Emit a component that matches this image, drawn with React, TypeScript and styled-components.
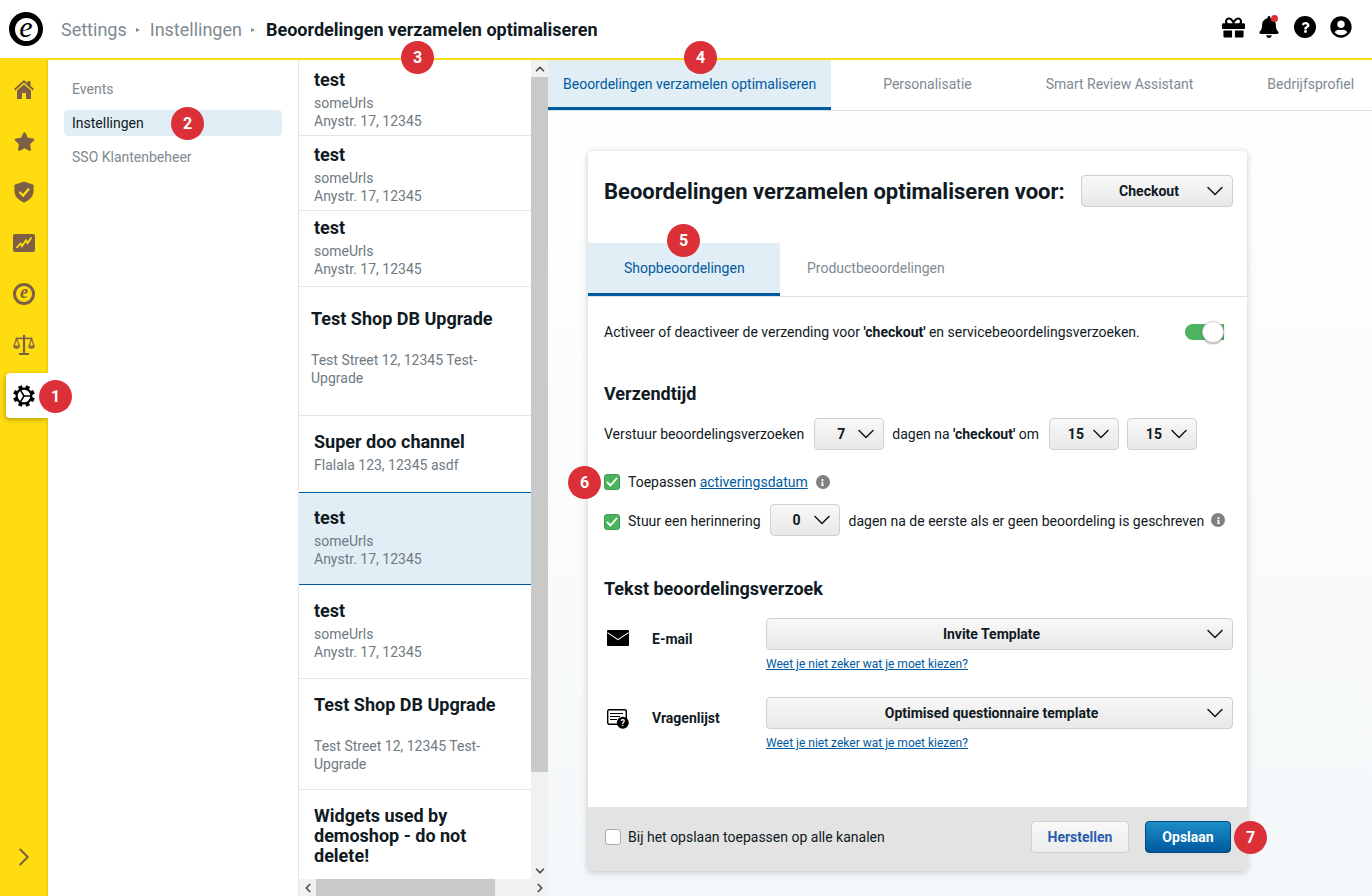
import * as React from 'react';
import styled, { createGlobalStyle } from 'styled-components';
import { FaBell, FaGift, FaInfo, FaQuestion, FaStar, FaUserCircle } from 'react-icons/fa';
import { FiChevronDown, FiChevronLeft, FiChevronRight, FiChevronUp } from 'react-icons/fi';

const GlobalStyle = createGlobalStyle`
  html, body {
    margin: 0;
    padding: 0;
    height: 100%;
    overflow: hidden;
    font-family: Roboto, "Liberation Sans", sans-serif;
    color: #0f1a23;
    background: #fff;
  }
  * { box-sizing: border-box; }
`;

const shops = [
  { title: 'test', sub: 'someUrls', address: 'Anystr. 17, 12345', height: 76, pad: 10, inset: 15 },
  { title: 'test', sub: 'someUrls', address: 'Anystr. 17, 12345', height: 75, pad: 9, inset: 15 },
  { title: 'test', sub: 'someUrls', address: 'Anystr. 17, 12345', height: 76, pad: 7, inset: 15 },
  { title: 'Test Shop DB Upgrade', address: 'Test Street 12, 12345 Test-Upgrade', height: 129, pad: 22, inset: 12, spaced: true },
  { title: 'Super doo channel', address: 'Flalala 123, 12345 asdf', height: 77, pad: 16, inset: 15 },
  { title: 'test', sub: 'someUrls', address: 'Anystr. 17, 12345', height: 92, pad: 15, inset: 15, active: true },
  { title: 'test', sub: 'someUrls', address: 'Anystr. 17, 12345', height: 94, pad: 16, inset: 15 },
  { title: 'Test Shop DB Upgrade', address: 'Test Street 12, 12345 Test-Upgrade', height: 111, pad: 16, inset: 15, spaced: true },
  { title: 'Widgets used by demoshop - do not delete!', height: 100, pad: 16, inset: 15 },
];

const badges = [
  { n: 1, x: 55, y: 396 },
  { n: 2, x: 187, y: 123 },
  { n: 3, x: 417, y: 57 },
  { n: 4, x: 700, y: 57 },
  { n: 5, x: 683, y: 240 },
  { n: 6, x: 584, y: 482 },
  { n: 7, x: 1250, y: 837 },
];

const HomeIcon = () => (
  <svg width="20" height="19" viewBox="0 0 20 19" fill="#7d5f46">
    <path d="M10 0 L13.5 3.2 V1 H16.5 V5.8 L20 9 L18.8 10.4 L10 2.6 L1.2 10.4 L0 9 Z" />
    <path d="M3 10.6 L10 4.4 L17 10.6 V19 H12 V13 H8 V19 H3 Z" />
  </svg>
);

const ShieldIcon = () => (
  <svg width="20" height="22" viewBox="0 0 22 24">
    <path d="M11 0.5 L21.5 4 V11 C21.5 17 17 21 11 23.8 C5 21 0.5 17 0.5 11 V4 Z" fill="#7d5f46" />
    <path d="M6 12 L10 16 L16.5 8.5" fill="none" stroke="#ffdc0f" strokeWidth="2.6" />
  </svg>
);

const ChartIcon = () => (
  <svg width="22" height="18" viewBox="0 0 22 18">
    <rect width="22" height="18" rx="2" fill="#7d5f46" />
    <path d="M3.5 14 L7.5 9.5 L9 12 L13 6.5 L14.5 9 L18.5 3.5" fill="none" stroke="#ffdc0f" strokeWidth="1.8" />
  </svg>
);

const ScaleIcon = () => (
  <svg width="22" height="20" viewBox="0 0 22 20" fill="none" stroke="#7d5f46">
    <path d="M11 0 V18" strokeWidth="2.2" />
    <path d="M6 19 H16" strokeWidth="2" />
    <path d="M2.5 3.4 H19.5" strokeWidth="1.6" />
    <path d="M3.5 3.8 L1 11 H6.5 Z M18.5 3.8 L16 11 H21 Z" strokeWidth="1.1" />
    <path d="M0 11.5 C0.5 14.5 6.5 14.5 7 11.5 Z M15 11.5 C15.5 14.5 21.5 14.5 22 11.5 Z" fill="#7d5f46" strokeWidth="0" />
  </svg>
);

const GearIcon = () => (
  <svg width="22" height="22" viewBox="0 0 22 22">
    {[0, 45, 90, 135, 180, 225, 270, 315].map((a) => (
      <rect key={a} x="9" y="0.2" width="4" height="4" fill="#000" transform={`rotate(${a + 22.5} 11 11)`} />
    ))}
    <circle cx="11" cy="11" r="7.4" fill="#fff" stroke="#000" strokeWidth="2.2" />
    <path d="M11 11 H18 M11 11 L7.4 5 M11 11 L7.4 17" fill="none" stroke="#000" strokeWidth="1.5" />
  </svg>
);

const MailIcon = () => (
  <svg width="22" height="16" viewBox="0 0 22 16">
    <rect width="22" height="16" rx="1" fill="#000" />
    <path d="M0.5 2.6 L11 9.6 L21.5 2.6" fill="none" stroke="#fff" strokeWidth="1.1" />
  </svg>
);

const FormIcon = () => (
  <svg width="22" height="20" viewBox="0 0 22 20">
    <rect x="0.7" y="0.7" width="18.6" height="14.6" rx="1.5" fill="#fff" stroke="#000" strokeWidth="1.4" />
    <path d="M3 4.5 H16 M3 7.5 H13 M3 10.5 H10" stroke="#000" strokeWidth="1.2" />
    <circle cx="15.8" cy="13.8" r="6" fill="#000" />
    <text x="15.8" y="17" fontSize="9" fontWeight="700" fill="#fff" textAnchor="middle" fontFamily="Roboto">?</text>
  </svg>
);

const CheckMark = () => (
  <svg width="12" height="10" viewBox="0 0 12 10">
    <path d="M1 5 L4.5 8.5 L11 1" fill="none" stroke="#fff" strokeWidth="1.8" />
  </svg>
);

const Info = () => (
  <InfoDot>
    <FaInfo size={7} />
  </InfoDot>
);

const Select = ({ label, width }: { label: string; width?: number }) => (
  <SelectBox $width={width}>
    {label}
    <SelectChevron>
      <FiChevronDown size={28} strokeWidth={1.3} />
    </SelectChevron>
  </SelectBox>
);

const App = () => {
  return (
    <Page>
      <GlobalStyle />
      <Header>
        <Logo>
          <LogoInner>e</LogoInner>
        </Logo>
        <Crumb>Settings</Crumb>
        <CrumbArrow />
        <Crumb>Instellingen</Crumb>
        <CrumbArrow />
        <CrumbCurrent>Beoordelingen verzamelen optimaliseren</CrumbCurrent>
        <HeaderIcons>
          <HeaderIcon>
            <FaGift size={23} />
          </HeaderIcon>
          <HeaderIcon>
            <FaBell size={22} />
            <BellDot />
          </HeaderIcon>
          <HeaderIcon>
            <HelpDisc>
              <FaQuestion size={11} />
            </HelpDisc>
          </HeaderIcon>
          <HeaderIcon>
            <FaUserCircle size={22} />
          </HeaderIcon>
        </HeaderIcons>
      </Header>

      <Content>
        <Sidebar>
          <SideItem><HomeIcon /></SideItem>
          <SideItem $nudge={2}><FaStar size={21} /></SideItem>
          <SideItem><ShieldIcon /></SideItem>
          <SideItem><ChartIcon /></SideItem>
          <SideItem>
            <SideLogo>e</SideLogo>
          </SideItem>
          <SideItem><ScaleIcon /></SideItem>
          <SideItemActive><GearIcon /></SideItemActive>
          <SideExpand>
            <FiChevronRight size={30} strokeWidth={1.6} />
          </SideExpand>
        </Sidebar>

        <SubNav>
          <SubNavItem>Events</SubNavItem>
          <SubNavItem $active>Instellingen</SubNavItem>
          <SubNavItem>SSO Klantenbeheer</SubNavItem>
        </SubNav>

        <ListPane>
          <ListBody>
            <ListItems>
              {shops.map((shop, i) => (
                <ShopRow key={i} $height={shop.height} $pad={shop.pad} $inset={shop.inset} $active={shop.active}>
                  <ShopTitle>{shop.title}</ShopTitle>
                  {shop.sub && <ShopLine>{shop.sub}</ShopLine>}
                  {shop.address && <ShopLine $spaced={shop.spaced}>{shop.address}</ShopLine>}
                </ShopRow>
              ))}
            </ListItems>
            <VScroll>
              <ScrollArrow><FiChevronUp size={14} strokeWidth={3} /></ScrollArrow>
              <VThumb />
              <VTrack />
              <ScrollArrow><FiChevronDown size={14} strokeWidth={3} /></ScrollArrow>
            </VScroll>
          </ListBody>
          <HScroll>
            <ScrollArrow><FiChevronLeft size={14} strokeWidth={3} /></ScrollArrow>
            <HThumb />
            <HTrack />
            <ScrollArrow><FiChevronRight size={14} strokeWidth={3} /></ScrollArrow>
          </HScroll>
        </ListPane>

        <Main>
          <TopTabs>
            <TopTab $active>Beoordelingen verzamelen optimaliseren</TopTab>
            <TopTab>Personalisatie</TopTab>
            <TopTab>Smart Review Assistant</TopTab>
            <TopTab>Bedrijfsprofiel</TopTab>
          </TopTabs>

          <MainBody>
            <Card>
              <CardHeader>
                <CardTitle>Beoordelingen verzamelen optimaliseren voor:</CardTitle>
                <Select label="Checkout" width={152} />
              </CardHeader>

              <CardTabs>
                <CardTab $active>Shopbeoordelingen</CardTab>
                <CardTab>Productbeoordelingen</CardTab>
              </CardTabs>

              <CardBody>
                <ToggleRow>
                  <span>
                    Activeer of deactiveer de verzending voor <b>'checkout'</b> en servicebeoordelingsverzoeken.
                  </span>
                  <Toggle>
                    <ToggleKnob />
                  </Toggle>
                </ToggleRow>

                <SectionTitle>Verzendtijd</SectionTitle>
                <TimeRow>
                  <TimeLabel>Verstuur beoordelingsverzoeken</TimeLabel>
                  <Select label="7" width={70} />
                  <TimeLabel>
                    dagen na <b>'checkout'</b> om
                  </TimeLabel>
                  <Select label="15" width={70} />
                  <Select label="15" width={70} />
                </TimeRow>

                <ApplyRow>
                  <Checkbox $checked>
                    <CheckMark />
                  </Checkbox>
                  <span>
                    Toepassen <TextLink href="#">activeringsdatum</TextLink>
                  </span>
                  <Info />
                </ApplyRow>

                <ReminderRow>
                  <Checkbox $checked>
                    <CheckMark />
                  </Checkbox>
                  <ReminderLead>Stuur een herinnering</ReminderLead>
                  <Select label="0" width={70} />
                  <ReminderTail>dagen na de eerste als er geen beoordeling is geschreven</ReminderTail>
                  <Info />
                </ReminderRow>

                <TemplateTitle>Tekst beoordelingsverzoek</TemplateTitle>

                <TemplateRow>
                  <TemplateIcon><MailIcon /></TemplateIcon>
                  <TemplateLabel>E-mail</TemplateLabel>
                  <div>
                    <Select label="Invite Template" />
                    <HelpLink href="#">Weet je niet zeker wat je moet kiezen?</HelpLink>
                  </div>
                </TemplateRow>

                <TemplateRow>
                  <TemplateIcon><FormIcon /></TemplateIcon>
                  <TemplateLabel>Vragenlijst</TemplateLabel>
                  <div>
                    <Select label="Optimised questionnaire template" />
                    <HelpLink href="#">Weet je niet zeker wat je moet kiezen?</HelpLink>
                  </div>
                </TemplateRow>
              </CardBody>

              <CardFooter>
                <Checkbox />
                <FooterLabel>Bij het opslaan toepassen op alle kanalen</FooterLabel>
                <ResetButton>Herstellen</ResetButton>
                <SaveButton>Opslaan</SaveButton>
              </CardFooter>
            </Card>
          </MainBody>
        </Main>
      </Content>

      {badges.map((b) => (
        <Badge key={b.n} $x={b.x} $y={b.y}>
          {b.n}
        </Badge>
      ))}
    </Page>
  );
};

export default App;

const Page = styled.div`
  position: relative;
  width: 1372px;
  height: 896px;
  display: flex;
  flex-direction: column;
  overflow: hidden;
  font-size: 14px;
`;

const Header = styled.header`
  height: 60px;
  flex: none;
  display: flex;
  align-items: center;
  padding: 0 13px 0 9px;
  background: #fff;
  border-bottom: 2px solid #ffdc0f;
`;

const Logo = styled.div`
  width: 34px;
  height: 34px;
  margin-right: 18px;
  border-radius: 50%;
  background: #000;
  display: flex;
  align-items: center;
  justify-content: center;
`;

const LogoInner = styled.div`
  width: 23px;
  height: 23px;
  border-radius: 50%;
  background: #fff;
  color: #000;
  display: flex;
  align-items: center;
  justify-content: center;
  font: italic 400 30px/22px "Liberation Serif", serif;
  padding-bottom: 5px;
`;

const Crumb = styled.span`
  font-size: 18px;
  color: #808a91;
`;

const CrumbArrow = styled.span`
  width: 0;
  height: 0;
  margin: 2px 10px 0 9px;
  border-left: 4px solid #808a91;
  border-top: 2.5px solid transparent;
  border-bottom: 2.5px solid transparent;
`;

const CrumbCurrent = styled.span`
  margin-left: 1px;
  font-size: 18px;
  font-weight: 700;
  color: #0f1a23;
`;

const HeaderIcons = styled.div`
  margin: 0 0 4px auto;
  display: flex;
`;

const HeaderIcon = styled.div`
  position: relative;
  width: 36px;
  height: 26px;
  display: flex;
  align-items: center;
  justify-content: center;
  color: #000;
`;

const BellDot = styled.span`
  position: absolute;
  top: 1px;
  left: 20px;
  width: 7px;
  height: 7px;
  border-radius: 50%;
  background: #dc3039;
`;

const HelpDisc = styled.div`
  width: 22px;
  height: 22px;
  border-radius: 50%;
  background: #000;
  color: #fff;
  display: flex;
  align-items: center;
  justify-content: center;
`;

const Content = styled.div`
  flex: 1;
  min-height: 0;
  display: flex;
`;

const Sidebar = styled.nav`
  width: 48px;
  flex: none;
  padding-top: 4px;
  display: flex;
  flex-direction: column;
  align-items: flex-end;
  background: #ffdc0f;
  color: #7d5f46;
  box-shadow: inset -3px 0 3px -3px rgba(0, 0, 0, 0.2);
`;

const SideItem = styled.div<{ $nudge?: number }>`
  width: 48px;
  height: 51px;
  flex: none;
  padding-top: ${(p) => p.$nudge ?? 0}px;
  display: flex;
  align-items: center;
  justify-content: center;
`;

const SideItemActive = styled.div`
  width: 42px;
  height: 45px;
  flex: none;
  margin-top: 3px;
  padding-right: 6px;
  display: flex;
  align-items: center;
  justify-content: center;
  background: #fff;
  border-radius: 4px 0 0 4px;
  box-shadow: -1px 2px 4px rgba(0, 0, 0, 0.25);
`;

const SideLogo = styled.div`
  width: 22px;
  height: 22px;
  border-radius: 50%;
  background: #ffdc0f;
  border: 3.5px solid #7d5f46;
  color: #7d5f46;
  display: flex;
  align-items: center;
  justify-content: center;
  font: italic 700 18px/14px "Liberation Serif", serif;
  padding-bottom: 3px;
`;

const SideExpand = styled.div`
  width: 48px;
  margin-top: auto;
  padding-bottom: 24px;
  display: flex;
  justify-content: center;
`;

const SubNav = styled.div`
  width: 250px;
  flex: none;
  padding: 16px 16px 0;
  display: flex;
  flex-direction: column;
  gap: 8px;
  background: #fff;
`;

const SubNavItem = styled.div<{ $active?: boolean }>`
  height: 26px;
  padding: 0 8px;
  display: flex;
  align-items: center;
  border-radius: 4px;
  font-size: 14px;
  color: ${(p) => (p.$active ? '#0f1a23' : '#808a91')};
  background: ${(p) => (p.$active ? '#e1eef5' : 'transparent')};
`;

const ListPane = styled.div`
  width: 250px;
  flex: none;
  display: flex;
  flex-direction: column;
  border-left: 1px solid #e5e5e5;
  background: #fff;
`;

const ListBody = styled.div`
  flex: 1;
  min-height: 0;
  display: flex;
`;

const ListItems = styled.div`
  flex: 1;
  min-width: 0;
  overflow: hidden;
`;

const ShopRow = styled.div<{ $height: number; $pad: number; $inset: number; $active?: boolean }>`
  height: ${(p) => p.$height}px;
  padding: ${(p) => p.$pad}px 16px 0 ${(p) => p.$inset}px;
  background: ${(p) => (p.$active ? '#e1eef5' : '#fff')};
  border-bottom: 1px solid ${(p) => (p.$active ? '#005aa0' : '#e5e5e5')};
  box-shadow: ${(p) => (p.$active ? '0 -1px 0 #005aa0' : 'none')};
`;

const ShopTitle = styled.div`
  font-size: 18px;
  line-height: 20px;
  font-weight: 700;
  color: #0f1a23;
  margin-bottom: 4px;
`;

const ShopLine = styled.div<{ $spaced?: boolean }>`
  font-size: 14px;
  line-height: 18px;
  color: #6f7a82;
  margin-top: ${(p) => (p.$spaced ? '22px' : '0')};
`;

const VScroll = styled.div`
  width: 17px;
  flex: none;
  display: flex;
  flex-direction: column;
  background: #f1f1f1;
`;

const ScrollArrow = styled.div`
  width: 17px;
  height: 17px;
  flex: none;
  display: flex;
  align-items: center;
  justify-content: center;
  color: #505050;
  background: #f1f1f1;
`;

const VThumb = styled.div`
  height: 695px;
  flex: none;
  background: #c9c9c9;
`;

const VTrack = styled.div`
  flex: 1;
`;

const HScroll = styled.div`
  height: 17px;
  width: 249px;
  flex: none;
  display: flex;
  background: #f1f1f1;
`;

const HThumb = styled.div`
  width: 179px;
  flex: none;
  background: #c9c9c9;
`;

const HTrack = styled.div`
  flex: 1;
`;

const Main = styled.main`
  flex: 1;
  min-width: 0;
  display: flex;
  flex-direction: column;
  background: linear-gradient(#fff, #f4f7f9);
`;

const TopTabs = styled.div`
  height: 51px;
  flex: none;
  display: flex;
  background: #fff;
  border-bottom: 1px solid #e0e0e0;
`;

const TopTab = styled.div<{ $active?: boolean }>`
  height: 50px;
  padding: ${(p) => (p.$active ? '0 15px' : '0 37px')};
  margin-right: ${(p) => (p.$active ? '15px' : '0')};
  display: flex;
  align-items: center;
  white-space: nowrap;
  font-size: 14px;
  color: ${(p) => (p.$active ? '#005aa0' : '#808a91')};
  background: ${(p) => (p.$active ? '#e1eef5' : 'transparent')};
  border-bottom: 3px solid ${(p) => (p.$active ? '#005aa0' : 'transparent')};
`;

const MainBody = styled.div`
  flex: 1;
  padding: 40px 0 0 40px;
`;

const Card = styled.section`
  width: 659px;
  height: 720px;
  display: flex;
  flex-direction: column;
  background: #fff;
  border-radius: 4px;
  box-shadow: 0 1px 6px rgba(0, 0, 0, 0.22);
`;

const CardHeader = styled.div`
  height: 92px;
  flex: none;
  padding: 24px 14px 0 16px;
  display: flex;
  align-items: flex-start;
  justify-content: space-between;
`;

const CardTitle = styled.h2`
  margin: 0;
  font-size: 22px;
  line-height: 34px;
  font-weight: 700;
  color: #0f1a23;
`;

const CardTabs = styled.div`
  height: 54px;
  flex: none;
  display: flex;
  border-bottom: 1px solid #e0e0e0;
`;

const CardTab = styled.div<{ $active?: boolean }>`
  height: 53px;
  width: ${(p) => (p.$active ? '192px' : 'auto')};
  padding: ${(p) => (p.$active ? '0 0 0 36px' : '0 27px')};
  display: flex;
  align-items: center;
  font-size: 14px;
  color: ${(p) => (p.$active ? '#005aa0' : '#808a91')};
  background: ${(p) => (p.$active ? '#e1eef5' : 'transparent')};
  border-bottom: 3px solid ${(p) => (p.$active ? '#005aa0' : 'transparent')};
`;

const CardBody = styled.div`
  flex: 1;
  min-height: 0;
  padding: 23px 14px 0 16px;
  display: flex;
  flex-direction: column;
`;

const ToggleRow = styled.div`
  height: 24px;
  padding-right: 9px;
  display: flex;
  align-items: center;
  justify-content: space-between;
`;

const Toggle = styled.div`
  position: relative;
  width: 39px;
  height: 16px;
  border-radius: 8px 0 0 8px;
  background: #4db35e;
`;

const ToggleKnob = styled.span`
  position: absolute;
  right: 0;
  top: -3px;
  width: 22px;
  height: 22px;
  border-radius: 50%;
  background: #fff;
  border: 1px solid #cfcfcf;
  box-shadow: 0 1px 2px rgba(0, 0, 0, 0.35);
`;

const SectionTitle = styled.h3`
  margin: 38px 0 0;
  font-size: 18px;
  line-height: 24px;
  font-weight: 700;
  color: #0f1a23;
`;

const TemplateTitle = styled(SectionTitle)`
  margin-top: 41px;
`;

const TimeRow = styled.div`
  margin-top: 12px;
  display: flex;
  align-items: center;
  gap: 8px;
`;

const TimeLabel = styled.span`
  margin-right: 2px;
`;

const ApplyRow = styled.div`
  height: 24px;
  margin-top: 20px;
  display: flex;
  align-items: center;
  gap: 8px;
`;

const ReminderRow = styled.div`
  height: 32px;
  margin-top: 10px;
  display: flex;
  align-items: center;
  gap: 8px;
`;

const ReminderLead = styled.span`
  margin: 2px 1px 0 0;
`;

const ReminderTail = styled.span`
  margin: 2px -1px 0 1px;
`;

const Checkbox = styled.div<{ $checked?: boolean }>`
  width: 16px;
  height: 16px;
  flex: none;
  display: flex;
  align-items: center;
  justify-content: center;
  border-radius: 3px;
  border: 1px solid ${(p) => (p.$checked ? '#3f9c50' : '#aaa')};
  background: ${(p) => (p.$checked ? '#4db35e' : '#fff')};
  ${ReminderRow} & {
    margin-top: 4px;
  }
`;

const TextLink = styled.a`
  color: #005aa0;
  text-decoration: underline;
`;

const InfoDot = styled.span`
  width: 14px;
  height: 14px;
  flex: none;
  display: inline-flex;
  align-items: center;
  justify-content: center;
  border-radius: 50%;
  background: #808080;
  color: #fff;
`;

const SelectBox = styled.div<{ $width?: number }>`
  position: relative;
  width: ${(p) => (p.$width ? `${p.$width}px` : '100%')};
  height: 32px;
  flex: none;
  padding-right: 16px;
  display: flex;
  align-items: center;
  justify-content: center;
  border: 1px solid #d0d0d0;
  border-radius: 4px;
  background: linear-gradient(#f8f8f8, #e8e8e8);
  font-size: 14px;
  font-weight: 700;
  color: #0f1a23;
`;

const SelectChevron = styled.span`
  position: absolute;
  right: 3px;
  top: 1px;
  display: flex;
  color: #0f1a23;
`;

const TemplateRow = styled.div`
  margin-top: 17px;
  display: grid;
  grid-template-columns: 48px 114px 1fr;
  & + & {
    margin-top: 25px;
  }
`;

const TemplateIcon = styled.div`
  margin: 12px 0 0 3px;
`;

const TemplateLabel = styled.div`
  margin-top: 10px;
  font-size: 14px;
  line-height: 22px;
  font-weight: 700;
  color: #0f1a23;
`;

const HelpLink = styled.a`
  display: block;
  margin-top: 6px;
  font-size: 12px;
  line-height: 16px;
  color: #005aa0;
  text-decoration: underline;
`;

const CardFooter = styled.div`
  height: 64px;
  flex: none;
  padding: 0 16px 4px 17px;
  display: flex;
  align-items: center;
  background: #e3e3e3;
  border-radius: 0 0 4px 4px;
`;

const FooterLabel = styled.span`
  margin-left: 7px;
  flex: 1;
`;

const ResetButton = styled.button`
  width: 98px;
  height: 32px;
  margin-right: 16px;
  border: 1px solid #cfcfcf;
  border-radius: 4px;
  background: linear-gradient(#f8f8f8, #ececec);
  font: 700 14px Roboto, sans-serif;
  color: #2a5db0;
`;

const SaveButton = styled.button`
  width: 86px;
  height: 32px;
  border: 1px solid #03477c;
  border-radius: 4px;
  background: linear-gradient(#1c8ec8, #00589f);
  font: 700 14px Roboto, sans-serif;
  color: #fff;
`;

const Badge = styled.div<{ $x: number; $y: number }>`
  position: absolute;
  left: ${(p) => p.$x - 16}px;
  top: ${(p) => p.$y - 16}px;
  width: 33px;
  height: 33px;
  display: flex;
  align-items: center;
  justify-content: center;
  border-radius: 50%;
  background: #dc3039;
  color: #fff;
  font-size: 16px;
  font-weight: 700;
`;
